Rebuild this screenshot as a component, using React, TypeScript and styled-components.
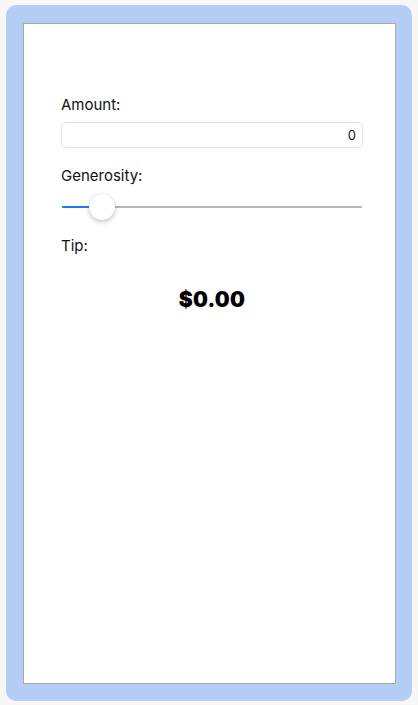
import React from "react";
import styled, { createGlobalStyle } from "styled-components";

const Global = createGlobalStyle`
  html, body { margin: 0; padding: 0; background: #f7f7f7; }
  body { font-family: Inter, "Noto Sans", sans-serif; }
`;

const Page = styled.div`
  width: 418px;
  height: 705px;
  box-sizing: border-box;
  padding: 5px 6px 4px 6px;
  display: flex;
`;

const Device = styled.div`
  flex: 1;
  background: #b4cdf5;
  border-radius: 10px;
  padding: 18px 16px 17px 17px;
  display: flex;
`;

const Screen = styled.div`
  flex: 1;
  background: #fff;
  border: 1px solid #a9a9a9;
  padding: 72px 32px 0 37px;
  display: flex;
  flex-direction: column;
`;

const Label = styled.div<{ $gap: number }>`
  font-size: 15px;
  color: #111;
  line-height: 18px;
  margin-bottom: ${(p) => p.$gap}px;
`;

const Input = styled.div`
  height: 26px;
  box-sizing: border-box;
  border: 1px solid #e3e3e3;
  border-radius: 4px;
  display: flex;
  align-items: center;
  justify-content: flex-end;
  padding-right: 6px;
  font-size: 13px;
  color: #111;
  margin-bottom: 19px;
`;

const SliderWrap = styled.div`
  position: relative;
  height: 28px;
  display: flex;
  align-items: center;
  margin: 0 1px 16px 1px;
`;

const Track = styled.div`
  flex: 1;
  height: 2px;
  background: #b5b5b5;
  border-radius: 1px;
  display: flex;
`;

const Fill = styled.div`
  height: 2px;
  background: #1a7cf5;
  border-radius: 1px;
`;

const Thumb = styled.div`
  position: absolute;
  top: 1px;
  width: 26px;
  height: 26px;
  border-radius: 50%;
  background: #fff;
  box-shadow: 0 2px 5px rgba(0, 0, 0, 0.22), 0 0 1px rgba(0, 0, 0, 0.18);
`;

const Amount = styled.div`
  text-align: center;
  font-size: 21px;
  font-weight: 900;
  color: #000;
  margin-top: 32px;
  letter-spacing: 0.2px;
`;

export default function App() {
  const fillPct = 9.3;
  return (
    <>
      <Global />
      <Page>
        <Device>
          <Screen>
            <Label $gap={8}>Amount:</Label>
            <Input>0</Input>
            <Label $gap={8}>Generosity:</Label>
            <SliderWrap>
              <Track>
                <Fill style={{ width: `${fillPct}%` }} />
              </Track>
              <Thumb style={{ left: 27 }} />
            </SliderWrap>
            <Label $gap={0}>Tip:</Label>
            <Amount>$0.00</Amount>
          </Screen>
        </Device>
      </Page>
    </>
  );
}
